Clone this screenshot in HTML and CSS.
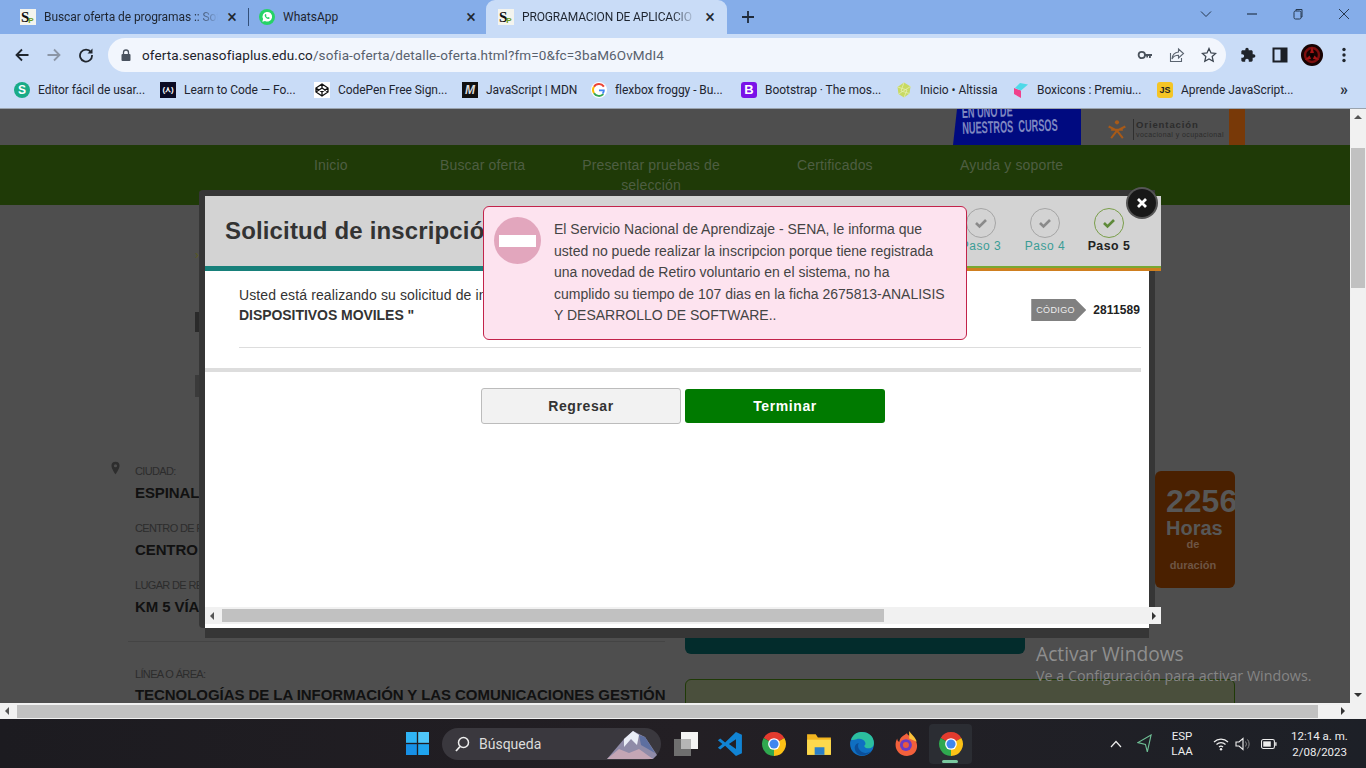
FILE: index.html
```html
<!DOCTYPE html>
<html lang="es">
<head>
<meta charset="utf-8">
<title>PROGRAMACION DE APLICACIONES</title>
<link rel="stylesheet" href="styles.css">
</head>
<body>
<svg class="defs" width="0" height="0" aria-hidden="true">
  <symbol id="chrome" viewBox="0 0 24 24">
    <path d="M12 12L2.470 6.500A11 11 0 0 1 21.530 6.500Z" fill="#e33b2e"/>
    <path d="M12 12L21.530 6.500A11 11 0 0 1 12 23Z" fill="#fbc116"/>
    <path d="M12 12L12 23A11 11 0 0 1 2.470 6.500Z" fill="#2fa84f"/>
    <circle cx="12" cy="12" r="5.400" fill="#fff"/>
    <circle cx="12" cy="12" r="4.200" fill="#3f86ee"/>
  </symbol>
</svg>

<header class="tabstrip">
  <div class="tab t1"><span class="sp">S<sub>P</sub></span><span class="tab-title">Buscar oferta de programas :: Sof</span><span class="tab-x">×</span></div>
  <span class="tab-sep"></span>
  <div class="tab t2">
    <svg class="fav" viewBox="0 0 16 16"><circle cx="8" cy="8" r="8" fill="#25d366"/><path d="M3.300 12.800l.8-2.800a4.800 4.800 0 1 1 1.900 1.900z" fill="#fff"/><path d="M6.200 5.200c.5-.5.8-.3 1 .2l.3.8-.5.7c.4.8 1 1.300 1.800 1.700l.7-.5.9.4c.4.2.4.6.1 1-.9.9-2.400.4-3.600-.8S5.300 6.100 6.200 5.200z" fill="#25d366"/></svg>
    <span class="tab-title">WhatsApp</span><span class="tab-x">×</span>
  </div>
  <div class="tab t3 active"><span class="sp">S<sub>P</sub></span><span class="tab-title">PROGRAMACION DE APLICACIO</span><span class="tab-x">×</span></div>
  <svg class="plus" viewBox="0 0 14 14"><path d="M7 1v12M1 7h12" stroke="#1f2a3a" stroke-width="1.800"/></svg>
  <div class="winctl">
    <svg viewBox="0 0 12 12"><path d="M1 3.500l5 5 5-5" fill="none" stroke="#26384f" stroke-width="1"/></svg>
    <svg viewBox="0 0 12 12"><path d="M1 6h10" stroke="#26384f" stroke-width="1.200"/></svg>
    <svg viewBox="0 0 12 12"><rect x="2" y="3" width="7" height="8" rx="1.500" fill="none" stroke="#26384f"/><path d="M4 3V1.500h6V9H9" fill="none" stroke="#26384f"/></svg>
    <svg viewBox="0 0 12 12"><path d="M1 1l10 10M11 1L1 11" stroke="#26384f" stroke-width="1"/></svg>
  </div>
</header>

<nav class="toolbar">
  <svg class="tb-ic" viewBox="0 0 16 16"><path d="M14.500 8H2.500M8 2.500L2.500 8 8 13.500" fill="none" stroke="#20262e" stroke-width="1.800"/></svg>
  <svg class="tb-ic" viewBox="0 0 16 16"><path d="M1.500 8h12M8 2.500L13.500 8 8 13.500" fill="none" stroke="#8b96a6" stroke-width="1.800"/></svg>
  <svg class="tb-ic" viewBox="0 0 16 16"><path d="M13 5.200A6 6 0 1 0 14 8" fill="none" stroke="#20262e" stroke-width="1.800"/><path d="M14.500 1.500v5h-5z" fill="#20262e"/></svg>
  <div class="omnibox">
    <svg class="lock" viewBox="0 0 10 12"><rect x="0.500" y="5" width="9" height="7" rx="1" fill="#49525e"/><path d="M2.500 5V3.500a2.500 2.500 0 0 1 5 0V5" fill="none" stroke="#49525e" stroke-width="1.300"/></svg>
    <span class="url"><b>oferta.senasofiaplus.edu.co</b>/sofia-oferta/detalle-oferta.html?fm=0&amp;fc=3baM6OvMdI4</span>
    <span class="omni-ics">
      <svg viewBox="0 0 16 16"><circle cx="4.800" cy="8" r="3.200" fill="none" stroke="#4a525c" stroke-width="1.800"/><path d="M8 7h7v2h-1.200v2H12V9h-1v1.500H9.300V9H8z" fill="#4a525c"/></svg>
      <svg viewBox="0 0 16 16"><path d="M9.500 2l5 4.500-5 4.500V8.300C6 8.300 4.200 9.500 3 12c.3-4 2.500-6.500 6.500-7z" fill="none" stroke="#5b6470" stroke-width="1.100"/><path d="M1.500 6v8.500h11V11" fill="none" stroke="#5b6470" stroke-width="1.100"/></svg>
      <svg viewBox="0 0 16 16"><path d="M8 1.500l2 4.400 4.700.5-3.500 3.200 1 4.700L8 11.900l-4.200 2.400 1-4.700L1.300 6.400 6 5.900z" fill="none" stroke="#3d4651" stroke-width="1.300"/></svg>
    </span>
  </div>
  <div class="tb-right">
    <svg viewBox="0 0 24 24"><path d="M20.500 11H19V7c0-1.100-.9-2-2-2h-4V3.500C13 2.120 11.880 1 10.500 1S8 2.120 8 3.500V5H4c-1.100 0-1.990.9-1.990 2v3.800H3.500c1.490 0 2.700 1.210 2.700 2.700s-1.210 2.700-2.700 2.700H2V20c0 1.100.9 2 2 2h3.800v-1.500c0-1.490 1.210-2.700 2.700-2.700 1.490 0 2.700 1.210 2.700 2.700V22H17c1.100 0 2-.9 2-2v-4h1.500c1.380 0 2.500-1.120 2.500-2.500S21.880 11 20.500 11z" fill="#1f242b"/></svg>
    <svg viewBox="0 0 16 16"><rect x="1.500" y="1.500" width="13" height="13" fill="none" stroke="#1b1f26" stroke-width="2"/><rect x="8.500" y="1.500" width="6" height="13" fill="#1b1f26"/></svg>
    <svg class="avatar" viewBox="0 0 22 22"><circle cx="11" cy="11" r="11" fill="#160303"/><circle cx="11" cy="11" r="7" fill="none" stroke="#7c0e0e" stroke-width="2.400"/><path d="M11 2.500l2 6.500h-4zM3.600 16l5-4.600 1.500 3.500zM18.400 16l-5-4.600-1.500 3.500z" fill="#a51414"/><circle cx="11" cy="11.500" r="1.600" fill="#0a0000"/></svg>
    <svg viewBox="0 0 16 16"><circle cx="8" cy="2.500" r="1.700" fill="#20262e"/><circle cx="8" cy="8" r="1.700" fill="#20262e"/><circle cx="8" cy="13.500" r="1.700" fill="#20262e"/></svg>
  </div>
</nav>

<div class="bookmarks">
  <div class="bm"><span class="bi bi-s">S</span><span>Editor fácil de usar...</span></div>
  <div class="bm"><span class="bi bi-fcc">(⋏)</span><span>Learn to Code — Fo...</span></div>
  <div class="bm"><svg class="bi" viewBox="0 0 16 16"><rect width="16" height="16" fill="#fff"/><path d="M8 2l6 4v4l-6 4-6-4V6zM2 6l6 4 6-4M2 10l6-4 6 4M8 2v4M8 10v4" fill="none" stroke="#111" stroke-width="1.300"/></svg><span>CodePen Free Sign...</span></div>
  <div class="bm"><span class="bi bi-mdn">M</span><span>JavaScript | MDN</span></div>
  <div class="bm"><svg class="bi" viewBox="0 0 16 16"><circle cx="8" cy="8" r="8" fill="#fff"/><path d="M12.900 4.600A6 6 0 0 0 3 4.800" fill="none" stroke="#ea4335" stroke-width="2"/><path d="M3 4.800a6 6 0 0 0 0 6.400" fill="none" stroke="#fbbc05" stroke-width="2"/><path d="M3 11.200a6 6 0 0 0 9.300.9" fill="none" stroke="#34a853" stroke-width="2"/><path d="M8 7.500h5.700c.2 2-.4 3.400-1.400 4.600L10.800 11c.6-.5 1-1.100 1-1.800H8z" fill="#4285f4"/></svg><span>flexbox froggy - Bu...</span></div>
  <div class="bm"><span class="bi bi-b">B</span><span>Bootstrap · The mos...</span></div>
  <div class="bm"><svg class="bi" viewBox="0 0 16 16"><path d="M8 .5l6.500 4-1 7L8 15.500 2.500 12 1.500 5z" fill="#c8da62"/><path d="M8 .5L5 9l8.500 2.500M1.500 5L11 8 8 15.500M14.500 4.500L2.500 12" fill="none" stroke="#e6efb0" stroke-width=".8"/></svg><span>Inicio • Altissia</span></div>
  <div class="bm"><svg class="bi" viewBox="0 0 16 16"><path d="M1 6l7 2.500V16l-7-4z" fill="#f0418c"/><path d="M7 1l8 1.500L8 8.500 2 6z" fill="#4fd9e8"/></svg><span>Boxicons : Premiu...</span></div>
  <div class="bm"><span class="bi bi-js">JS</span><span>Aprende JavaScript...</span></div>
  <span class="more">»</span>
</div>

<main class="viewport">
  <div class="pagearea">
    <div class="banner">
      <div class="promo"><span class="promo-text">EN UNO DE<br>NUESTROS&nbsp; CURSOS</span></div>
      <div class="orient">
        <svg class="sena" viewBox="0 0 24 24"><circle cx="12" cy="4" r="2.500" fill="#a85a18"/><path d="M2 9l10 5 10-5M12 14l-7 9M12 14l7 9M5 13l14 0" fill="none" stroke="#a85a18" stroke-width="2.400"/></svg>
        <div class="orient-text"><strong>Orientación</strong><small>vocacional y ocupacional</small></div>
      </div>
      <div class="orange-bar"></div>
    </div>
    <div class="sitenav">
      <span>Inicio</span>
      <span>Buscar oferta</span>
      <span class="wrap">Presentar pruebas de selección</span>
      <span>Certificados</span>
      <span>Ayuda y soporte</span>
    </div>
    <div class="main">
      <div class="leftcol">
        <div class="ghost g1">›</div>
        <div class="ghost g2"></div>
        <div class="ghost g3"></div>
        <div class="info">
          <svg class="pin" viewBox="0 0 10 14"><path d="M5 0a4.500 4.500 0 0 0-4.500 4.500C.5 8 5 14 5 14s4.500-6 4.500-9.500A4.500 4.500 0 0 0 5 0z" fill="#2d2d2d"/><circle cx="5" cy="4.500" r="1.800" fill="#4e4e4e"/></svg>
          <div>
            <div class="field"><label>CIUDAD:</label><p>ESPINAL</p></div>
            <div class="field"><label>CENTRO DE F</label><p>CENTRO</p></div>
            <div class="field"><label>LUGAR DE RE</label><p>KM 5 VÍA</p></div>
            <div class="divider"></div>
            <div class="field"><label>LÍNEA O ÁREA:</label><p class="long">TECNOLOGÍAS DE LA INFORMACIÓN Y LAS COMUNICACIONES GESTIÓN</p></div>
          </div>
        </div>
      </div>
      <div class="rightcol">
        <div class="hours">
          <strong>2256</strong>
          <b>Horas</b>
          <span>de</span>
          <span>duración</span>
        </div>
        <div class="tealbox"></div>
        <div class="olivebox"></div>
      </div>
    </div>
    <div class="activate">
      <p>Activar Windows</p>
      <small>Ve a Configuración para activar Windows.</small>
    </div>

    <section class="modal">
      <div class="m-inner">
        <div class="m-head">
          <h2>Solicitud de inscripció</h2>
          <div class="steps">
            <div class="step"><i><svg viewBox="0 0 14 14"><path d="M2 7l3.500 3.500L12 4" fill="none" stroke="#8a8a8a" stroke-width="2.600"/></svg></i><span>Paso 3</span></div>
            <div class="step"><i><svg viewBox="0 0 14 14"><path d="M2 7l3.500 3.500L12 4" fill="none" stroke="#8a8a8a" stroke-width="2.600"/></svg></i><span>Paso 4</span></div>
            <div class="step current"><i><svg viewBox="0 0 14 14"><path d="M2 7l3.500 3.500L12 4" fill="none" stroke="#5f8a3a" stroke-width="2.600"/></svg></i><span>Paso 5</span></div>
          </div>
        </div>
        <div class="m-strip"></div>
        <div class="m-body">
          <div class="m-text">Usted está realizando su solicitud de in<br><b>DISPOSITIVOS MOVILES "</b></div>
          <div class="code"><span class="code-tag">CÓDIGO</span><b>2811589</b></div>
        </div>
        <div class="rule thin"></div>
        <div class="rule thick"></div>
        <div class="m-actions">
          <button class="btn back">Regresar</button>
          <button class="btn go">Terminar</button>
        </div>
        <div class="m-scroll">
          <span class="arr left"></span>
          <span class="m-thumb"></span>
          <span class="arr right"></span>
        </div>
      </div>
      <button class="m-close" aria-label="Cerrar"><svg viewBox="0 0 12 12"><path d="M2 2l8 8M10 2l-8 8" stroke="#fff" stroke-width="2.800"/></svg></button>
    </section>

    <div class="alert">
      <span class="no-entry"><i></i></span>
      <p>El Servicio Nacional de Aprendizaje - SENA, le informa que<br>usted no puede realizar la inscripcion porque tiene registrada<br>una novedad de Retiro voluntario en el sistema, no ha<br>cumplido su tiempo de 107 dias en la ficha 2675813-ANALISIS<br>Y DESARROLLO DE SOFTWARE..</p>
    </div>
  </div>
  <div class="vscroll">
    <span class="arr up"></span>
    <span class="v-thumb"></span>
    <span class="arr down"></span>
  </div>
</main>

<div class="hscroll">
  <span class="arr left"></span>
  <span class="h-thumb"></span>
  <span class="arr right"></span>
</div>

<footer class="taskbar">
  <svg class="win" viewBox="0 0 24 24"><rect width="11.300" height="11.300" fill="#2fb4f5"/><rect x="12.700" width="11.300" height="11.300" fill="#4fc7fa"/><rect y="12.700" width="11.300" height="11.300" fill="#1790e6"/><rect x="12.700" y="12.700" width="11.300" height="11.300" fill="#1fa4ee"/></svg>
  <div class="search">
    <svg viewBox="0 0 16 16"><circle cx="9.500" cy="6.500" r="5" fill="none" stroke="#eee" stroke-width="1.500"/><path d="M6 10.500L2 15" stroke="#eee" stroke-width="1.800"/></svg>
    <span>Búsqueda</span>
    <svg class="mount" viewBox="0 0 50 30"><path d="M0 30L17 10 26 2 38 8 50 26 46 30z" fill="#8f8ba8"/><path d="M17 10l9-8 6 4-2 10-6-6-7 8z" fill="#e9edf6"/><path d="M32 6l6 2 10 16-14-8z" fill="#5d6fa0"/><path d="M0 30l12-10 10 4 10-4 14 10z" fill="#c4a6b5"/></svg>
  </div>
  <svg class="ti taskview" viewBox="0 0 24 24"><rect x="0" y="7" width="17" height="17" fill="#6f6f6f"/><rect x="7" y="0" width="17" height="17" fill="#f4f4f4"/><rect x="7" y="7" width="10" height="10" fill="#b5b5b5"/></svg>
  <svg class="ti vsc" viewBox="0 0 24 24"><path fill-rule="evenodd" d="M17.500 1L7.500 10.500 3 7 .8 8.500 5 12 .8 15.500 3 17l4.500-3.500L17.500 23l5.500-2.500v-17zM17.500 7.500L11 12l6.500 4.500z" fill="#1184d4"/></svg>
  <svg class="ti chr"><use href="#chrome"/></svg>
  <svg class="ti fold" viewBox="0 0 24 24"><path d="M1 3h8l2 3h12v16H1z" fill="#f2b51f"/><rect x="1" y="8" width="22" height="14" fill="#fcd94e"/><rect x="8" y="15" width="9" height="7" fill="#2a7fc9"/></svg>
  <svg class="ti edge" viewBox="0 0 24 24"><circle cx="12" cy="12" r="11" fill="#0f6fc2"/><path d="M2 8C4 2 9 1 12 1c6 0 11 4 11 10 0 3-2 5-5 5-2 0-4-1-4-2.500 1-.5 1.500-1.500 1-3-1-3-5-4-8-3-2 .5-4 1-5 .5z" fill="#2cbf9e"/><path d="M9 11c-2 4 1 8 5 9 2 .5 4 0 6-1-3 4-10 5-13 1S5 12 9 11z" fill="#0b4f9a"/></svg>
  <svg class="ti ff" viewBox="0 0 24 24"><path d="M12 2c1 3 6 4 8 7 3 5 1 14-8 14S-1 14 3 7c0 2 1 3 2 3 0-4 4-6 7-8z" fill="#f2603c"/><path d="M14 0c2 3 6 6 7 10l-7-3z" fill="#fcc23a"/><circle cx="11" cy="13" r="5.500" fill="#6a3bc4"/><circle cx="11" cy="13" r="2.800" fill="#e8593f"/></svg>
  <div class="activeapp"><svg><use href="#chrome"/></svg><span></span></div>
  <div class="tray">
    <svg class="t-chev" viewBox="0 0 12 8"><path d="M1 7l5-5.500L11 7" fill="none" stroke="#eee" stroke-width="1.200"/></svg>
    <svg class="t-loc" viewBox="0 0 16 20"><path d="M15 1L1 9l8 2 2 8z" fill="none" stroke="#6fbf95" stroke-width="1.200"/></svg>
    <div class="lang">ESP<br>LAA</div>
    <svg class="t-wifi" viewBox="0 0 16 14"><path d="M1 5a10 10 0 0 1 14 0M3.500 7.500a6.500 6.500 0 0 1 9 0M6 10a3 3 0 0 1 4 0" fill="none" stroke="#eee" stroke-width="1.200"/><circle cx="8" cy="12.300" r="1.200" fill="#eee"/></svg>
    <svg class="t-vol" viewBox="0 0 16 14"><path d="M1 5h3l4-3.500v11L4 9H1z" fill="none" stroke="#eee" stroke-width="1.100"/><path d="M10.500 4.500a4 4 0 0 1 0 5M12.500 2.500a7 7 0 0 1 0 9" fill="none" stroke="#888" stroke-width="1"/></svg>
    <svg class="t-bat" viewBox="0 0 18 12"><rect x=".6" y="1" width="14.500" height="10" rx="2" fill="none" stroke="#eee" stroke-width="1.200"/><rect x="2.500" y="3" width="8.500" height="6" fill="#eee"/><rect x="16" y="4" width="1.500" height="4" fill="#eee"/></svg>
    <div class="clock">12:14 a. m.<br>2/08/2023</div>
  </div>
</footer>
</body>
</html>
```
FILE: styles.css
```css
* { box-sizing: border-box; }
html, body { margin: 0; padding: 0; }
body {
  width: 1366px; height: 768px; overflow: hidden;
  display: flex; flex-direction: column;
  font-family: Roboto, "Liberation Sans", sans-serif;
  background: #4e4e4e;
}
.defs { position: absolute; }

/* ---------- browser chrome ---------- */
.tabstrip {
  height: 34px; flex: none; background: #85ade9;
  display: flex; align-items: center; padding-left: 10px;
}
.tab {
  height: 34px; display: flex; align-items: center;
  font-size: 12px; color: #1e2530; padding-left: 10px; position: relative;
}
.t1 { width: 238px; }
.t2 { width: 237px; }
.t3 { width: 241px; }
.t3.active { background: #c9dcf7; border-radius: 9px 9px 0 0; padding-left: 12px; }
.tab-sep { width: 1px; height: 18px; background: #33507a; flex: none; }
.sp {
  width: 16px; height: 16px; flex: none; background: #f4f4ee; color: #111;
  font: 700 15px/16px "Liberation Serif", serif; display: block; white-space: nowrap; overflow: hidden;
  letter-spacing: -1px; padding-left: 1px;
}
.sp sub { font: 700 8px/8px "Liberation Sans", sans-serif; color: #6a9a20; vertical-align: -1px; }
.fav { width: 16px; height: 16px; flex: none; }
.tab-title { margin-left: 8px; width: 174px; white-space: nowrap; overflow: hidden; letter-spacing: -.08px; }
.t1 .tab-title, .t3 .tab-title { -webkit-mask-image: linear-gradient(90deg, #000 150px, transparent); mask-image: linear-gradient(90deg, #000 150px, transparent); }
.t3 .tab-title { letter-spacing: -.15px; }
.t2 .tab-title { width: 172px; letter-spacing: 0; }
.tab-x { margin-left: 8px; font-size: 18px; line-height: 18px; width: 12px; text-align: center; color: #20262e; }
.t2 .tab-x { margin-left: 10px; }
.plus { width: 14px; height: 14px; margin-left: 14px; flex: none; }
.winctl { margin-left: auto; display: flex; padding-right: 16px; gap: 34px; align-self: flex-start; padding-top: 8px; }
.winctl svg { width: 12px; height: 12px; }

.toolbar {
  height: 38px; flex: none; background: #c9dcf7;
  display: flex; align-items: center; padding: 4px 0 0 14px;
}
.tb-ic { width: 16px; height: 16px; margin-right: 16px; flex: none; }
.omnibox {
  height: 34px; width: 1118px; margin-left: -2px; flex: none;
  background: #f2f6fd; border-radius: 17px;
  display: flex; align-items: center; padding-left: 13px;
}
.lock { width: 10px; height: 12px; flex: none; }
.url { margin-left: 11px; font-size: 13.500px; color: #58616d; letter-spacing: .11px; white-space: nowrap; }
.url b { font-weight: 400; color: #1d232b; }
.omni-ics { margin-left: auto; display: flex; gap: 16px; padding-right: 9px; }
.omni-ics svg { width: 16px; height: 16px; }
.tb-right { display: flex; align-items: center; margin-left: 14px; }
.tb-right svg { width: 16px; height: 16px; margin-right: 16px; }
.tb-right .avatar { width: 22px; height: 22px; margin: 0 13px 0 -3px; }

.bookmarks {
  height: 37px; flex: none; background: #c9dcf7; border-bottom: 1px solid #9aa3ad;
  display: grid; grid-template-columns: 146px 154px 148px 129px 150px 155px 117px 144px 183px auto;
  align-items: center; padding-left: 14px;
  font-size: 12px; color: #1e2530; letter-spacing: -.05px;
}
.bm { display: flex; align-items: center; gap: 8px; white-space: nowrap; }
.bi { width: 16px; height: 16px; flex: none; display: block; text-align: center; }
.bi-s { background: #19ab87; color: #fff; border-radius: 50%; font: 700 12px/16px "Liberation Sans", sans-serif; }
.bi-fcc { background: #0a0a23; color: #fff; font: 700 8px/16px "Liberation Sans", sans-serif; }
.bi-mdn { background: #111; color: #ddd; font: italic 700 12px/16px "Liberation Sans", sans-serif; }
.bi-b { background: #7a12e8; color: #fff; border-radius: 3px; font: 700 13px/16px "Liberation Sans", sans-serif; }
.bi-js { background: #f5c526; color: #222; border-radius: 3px; font: 700 9px/16px "Liberation Sans", sans-serif; }
.more { font-size: 16px; font-weight: 700; color: #2a3340; line-height: 16px; }

/* ---------- page behind the overlay ---------- */
.viewport { flex: none; height: 594px; display: flex; position: relative; }
.pagearea { width: 1350px; height: 594px; position: relative; overflow: hidden; background: #4e4e4e; }
.banner { height: 36px; display: flex; padding-left: 953px; }
.promo {
  width: 128px; background: #000a80; clip-path: polygon(4px 0, 100% 0, 100% 100%, 0 100%);
  overflow: hidden;
}
.promo-text {
  display: block; width: 180px; margin: -4px 0 0 9px;
  color: #7f88c0; font: 700 17px/16px "Liberation Sans", sans-serif; white-space: nowrap;
  transform: rotate(-2deg) scaleX(.54); transform-origin: 0 50%;
}
.orient { width: 148px; display: flex; align-items: center; padding: 4px 0 0 26px; }
.sena { width: 20px; height: 24px; flex: none; }
.orient-text { margin-left: 6px; border-left: 1px solid #2f2f2f; padding-left: 2px; display: flex; flex-direction: column; color: #2c2c2c; white-space: nowrap; }
.orient-text strong { font: 700 9.500px/11px "Liberation Sans", sans-serif; letter-spacing: .9px; }
.orient-text small { font: 7px/10px "Liberation Sans", sans-serif; letter-spacing: .42px; }
.orange-bar { width: 16px; background: #783908; }
.sitenav {
  height: 60px; background: #1f3a07; padding: 10px 0 0 314px;
  display: grid; grid-template-columns: 126px 141px 216px 163px auto;
  font: 14px/20px "Liberation Sans", sans-serif; color: #4e5e42; letter-spacing: .15px;
}
.wrap { width: 140px; text-align: center; }
.main { display: flex; height: 498px; font-family: "Liberation Sans", sans-serif; }
.leftcol { width: 685px; padding: 45px 0 0 111px; flex: none; }
.ghost { margin-left: 84px; }
.g1 { height: 10px; font-size: 12px; line-height: 10px; color: #5a5a20; }
.g2 { width: 4px; height: 20px; margin-top: 52px; background: #2a2a2a; }
.g3 { width: 4px; height: 22px; margin-top: 43px; background: #3a3a3a; }
.info { display: grid; grid-template-columns: 24px 1fr; margin-top: 67px; }
.pin { width: 9px; height: 14px; margin-top: -3px; }
.field { margin-bottom: 17px; white-space: nowrap; }
.field label { display: block; font-size: 11px; line-height: 14px; color: #2c2c2c; letter-spacing: -.65px; }
.field p { margin: 4px 0 0; font-size: 15px; font-weight: 700; line-height: 22px; color: #111; letter-spacing: -.1px; }
.field .long { white-space: nowrap; margin-top: 3px; letter-spacing: -.06px; }
.divider { height: 1px; background: #444; margin: 23px 0 25px -7px; width: 537px; }
.rightcol { flex: none; width: 550px; padding-top: 266px; }
.hours {
  margin-left: 470px; width: 80px; height: 117px; background: #4a2000; border-radius: 6px;
  display: flex; flex-direction: column; align-items: flex-start; padding: 12px 0 0 11px;
  overflow: hidden; color: #575757; white-space: nowrap;
}
.hours strong { font-size: 32px; line-height: 36px; flex: none; }
.hours b { font-size: 20px; line-height: 20px; margin: -1px 0 0 0; }
.hours span { font-size: 11px; font-weight: 700; line-height: 14px; color: #6e5544; align-self: center; margin: -1px 15px 0 0; }
.hours span + span { margin-top: 7px; }
.tealbox { height: 66px; width: 340px; background: #032c2c; border-radius: 0 0 6px 6px; }
.olivebox { height: 60px; background: #4a4f3c; border: 1px solid #1f3a07; border-radius: 6px; margin-top: 25px; }
.activate {
  position: absolute; left: 1036px; top: 533px; color: #8f8f8f; font-family: "Open Sans", sans-serif; white-space: nowrap;
}
.activate p { margin: 0; font-size: 19.200px; line-height: 24px; }
.activate small { display: block; font-size: 14.300px; line-height: 20px; color: #858585; }

/* ---------- modal ---------- */
.modal {
  position: absolute; left: 199px; top: 81px; width: 950px; height: 438px;
  border: solid #363636; border-width: 6px 0 0 6px; border-radius: 4px 0 0 4px;
  font-family: "Liberation Sans", sans-serif;
}
.modal::before { content: ""; position: absolute; left: 100%; top: -6px; width: 6px; height: 417px; background: #363636; }
.modal::after { content: ""; position: absolute; left: 0; right: 0; top: 100%; height: 10px; background: #363636; }
.m-inner { height: 100%; background: #fff; display: flex; flex-direction: column; position: relative; z-index: 1; }
.m-head { height: 70px; background: #d3d3d3; margin-right: -12px; display: flex; justify-content: space-between; padding: 12px 20px 0 20px; flex: none; overflow: hidden; }
.m-head h2 { margin: 8px 0 0; font-size: 24px; line-height: 30px; font-weight: 700; color: #333; letter-spacing: .15px; white-space: nowrap; }
.steps { display: flex; }
.step { width: 64px; display: flex; flex-direction: column; align-items: center; color: #3b9d96; font-size: 12px; letter-spacing: .5px; }
.step i { width: 30px; height: 30px; border-radius: 50%; border: 1px solid #a5a5a5; display: flex; align-items: center; justify-content: center; flex: none; }
.step i svg { width: 14px; height: 14px; }
.step span { line-height: 14px; margin-top: 1px; }
.step.current { color: #222; font-weight: 700; font-size: 12.300px; }
.step.current i { border-color: #7a9e4a; }
.m-strip { height: 5px; margin-right: -12px; flex: none; background: linear-gradient(90deg, #17807a 0 74%, #cf7f1f 76%); position: relative; }
.m-strip::after { content: ""; position: absolute; right: 0; top: 0; height: 2px; width: 300px; background: #78a832; }
.m-body { display: flex; justify-content: space-between; padding: 14px 9px 22px 34px; flex: none; height: 76px; }
.m-text { font-size: 14px; line-height: 20px; color: #333; white-space: nowrap; letter-spacing: .12px; }
.m-text b { color: #333; letter-spacing: -.05px; }
.code { display: flex; align-items: center; height: 22px; margin-top: 14px; gap: 7px; }
.code-tag {
  width: 55px; height: 22px; background: #808080; color: #eee; font-size: 9px; line-height: 22px; letter-spacing: .35px; padding-left: 5px;
  clip-path: polygon(0 0, 44px 0, 100% 50%, 44px 100%, 0 100%);
}
.code b { font-size: 12px; color: #222; letter-spacing: .1px; }
.rule { margin-right: 8px; flex: none; }
.thin { height: 1px; margin-left: 34px; background: #ddd; }
.thick { height: 4px; margin-top: 20px; background: #ddd; }
.m-actions { display: flex; align-items: center; gap: 4px; padding: 16px 0 0 276px; flex: none; }
.btn { width: 200px; font: 700 14px "Liberation Sans", sans-serif; letter-spacing: .6px; border-radius: 3px; cursor: pointer; }
.back { height: 36px; background: #f2f2f2; border: 1px solid #bcbcbc; color: #333; }
.go { height: 34px; background: #007a00; border: 0; color: #fff; }
.m-scroll { margin: auto -12px 4px 0; height: 17px; background: #f1f1f1; display: flex; align-items: center; flex: none; position: relative; }
.m-thumb { position: absolute; left: 17px; width: 662px; height: 13px; top: 2px; background: #c1c1c1; }
.m-close {
  position: absolute; right: -7px; top: -7px; width: 28px; height: 28px; padding: 0; border: 0; border-radius: 50%; z-index: 2;
  background: #181818; box-shadow: 0 0 0 2px #555; display: flex; align-items: center; justify-content: center;
}
.m-close svg { width: 12px; height: 12px; }

/* ---------- scroll arrows ---------- */
.arr { width: 0; height: 0; border: 4px solid transparent; flex: none; }
.arr.left { border-left: 0; border-right: 4px solid #555; margin-left: 5px; }
.arr.right { border-right: 0; border-left: 4px solid #333; margin-left: auto; margin-right: 5px; }
.arr.up { border-top: 0; border-bottom: 4px solid #555; }
.arr.down { border-bottom: 0; border-top: 4px solid #333; margin-top: auto; }

/* ---------- alert ---------- */
.alert {
  position: absolute; left: 483px; top: 97px; width: 484px; height: 134px;
  background: #fde3ef; border: 1px solid #c2234a; border-radius: 6px; z-index: 3;
  display: flex; padding: 10px 0 0 10px;
  font-family: "Liberation Sans", sans-serif;
}
.no-entry { width: 47px; height: 47px; border-radius: 50%; background: #e2a6bd; flex: none; display: flex; align-items: center; justify-content: center; }
.no-entry i { width: 37px; height: 12px; background: #fff; }
.alert p { margin: 2px 0 0 13px; font-size: 14px; line-height: 21.500px; color: #444; white-space: nowrap; }

/* ---------- page scrollbars ---------- */
.vscroll { width: 16px; background: #f1f1f1; display: flex; flex-direction: column; align-items: center; padding: 6px 0; position: relative; }
.v-thumb { position: absolute; top: 39px; left: 1px; width: 14px; height: 140px; background: #c1c1c1; }
.hscroll { height: 16px; width: 1366px; flex: none; background: #f1f1f1; display: flex; align-items: center; position: relative; padding-right: 16px; }
.h-thumb { position: absolute; left: 17px; top: 2px; width: 1301px; height: 13px; background: #c1c1c1; }

/* ---------- taskbar ---------- */
.taskbar {
  height: 49px; flex: none;
  background: linear-gradient(90deg, #1c1b20, #231f24 50%, #1d2027);
  display: flex; align-items: center; padding-left: 406px; color: #eee; position: relative;
}
.win { width: 23px; height: 23px; flex: none; }
.search {
  margin-left: 13px; width: 219px; height: 32px; border-radius: 16px; background: #3a383e;
  display: flex; align-items: center; padding-left: 12px; flex: none; font-size: 14px; color: #dcdcdc;
}
.search > svg:first-child { width: 16px; height: 16px; flex: none; }
.search span { margin-left: 9px; }
.mount { width: 50px; height: 30px; margin-left: auto; margin-right: 4px; }
.ti { flex: none; }
.taskview { width: 24px; height: 24px; margin-left: 13px; }
.vsc { width: 26px; height: 26px; margin-left: 19px; }
.chr { width: 26px; height: 26px; margin-left: 18px; }
.fold { width: 26px; height: 26px; margin-left: 19px; }
.edge { width: 26px; height: 26px; margin-left: 17px; }
.ff { width: 26px; height: 26px; margin-left: 19px; }
.activeapp { width: 43px; height: 40px; margin-left: 9px; background: #2b2d33; border-radius: 4px; display: flex; justify-content: center; padding-top: 7px; position: relative; flex: none; }
.activeapp svg { width: 26px; height: 26px; }
.activeapp span { position: absolute; left: 13px; bottom: 1px; width: 16px; height: 3px; border-radius: 2px; background: #7bc9a0; }
.tray { position: absolute; left: 1110px; top: 0; height: 49px; width: 256px; display: flex; align-items: center; font-size: 11.500px; }
.t-chev { width: 12px; height: 8px; flex: none; }
.t-loc { width: 15px; height: 19px; margin-left: 15px; flex: none; }
.lang { margin-left: 17px; text-align: center; line-height: 15px; width: 26px; flex: none; }
.t-wifi { width: 16px; height: 14px; margin-left: 18px; flex: none; }
.t-vol { width: 16px; height: 14px; margin-left: 6px; flex: none; }
.t-bat { width: 16px; height: 12px; margin-left: 10px; flex: none; }
.clock { margin-left: 14px; text-align: right; line-height: 16px; width: 56px; flex: none; white-space: nowrap; }
```
